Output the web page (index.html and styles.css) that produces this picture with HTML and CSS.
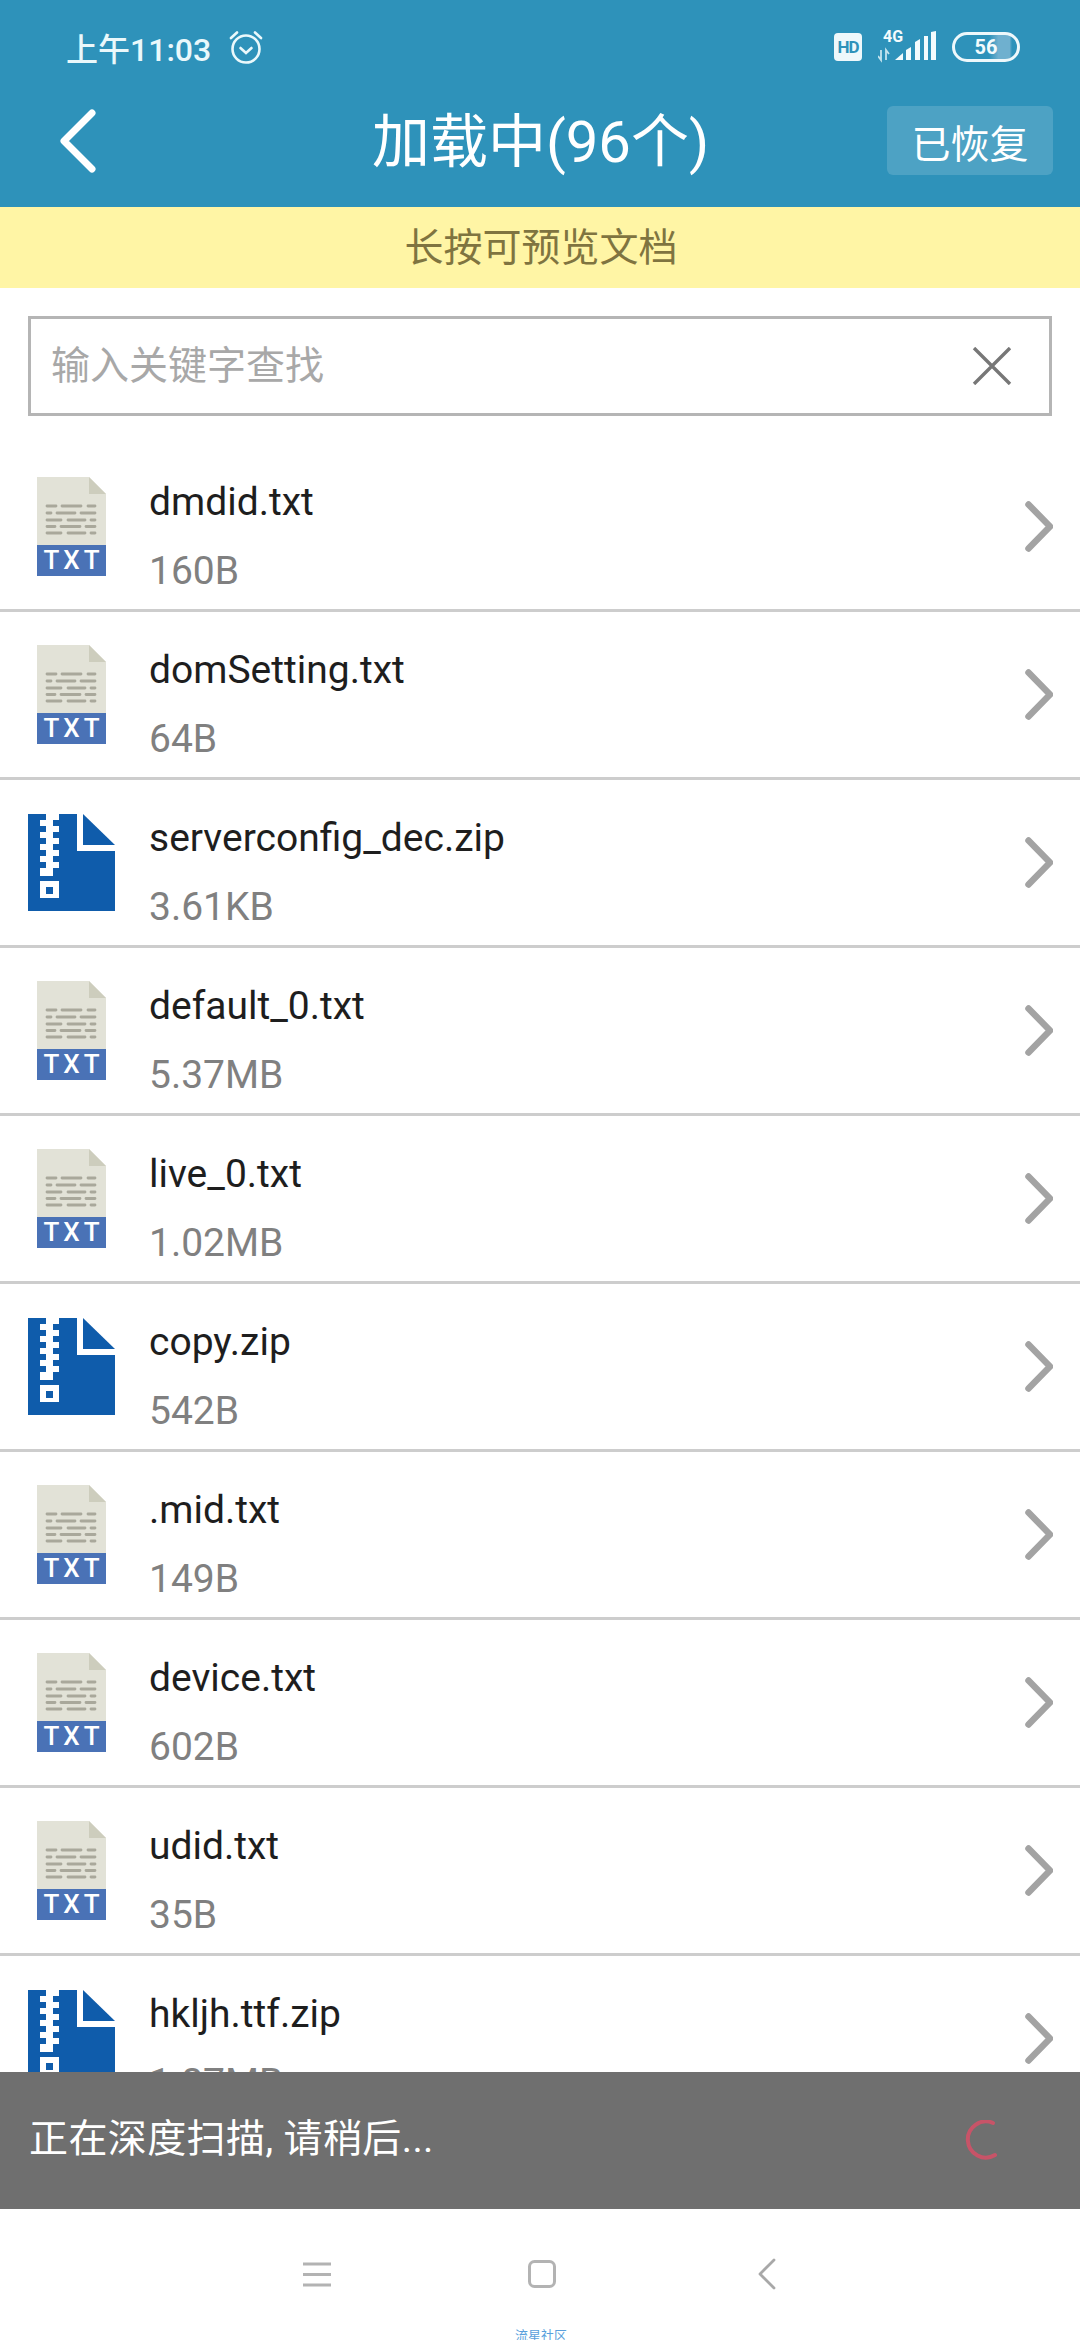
FILE: index.html
```html
<!DOCTYPE html>
<html lang="zh-CN">
<head>
    <meta charset="UTF-8">
    <meta name="viewport" content="width=device-width, initial-scale=1.0">
    <title>加载中</title>
    <link rel="stylesheet" href="styles.css">
</head>
<body>
    <!-- shared icons -->
    <svg class="defs" width="0" height="0">
        <symbol id="icon-txt" viewBox="0 0 69 99">
            <path d="M0 0H52L69 17V68H0Z" fill="#e2e2d7"/>
            <path d="M52 0L69 17H52Z" fill="#cdcdbd"/>
            <path d="M0 68H69V99H0Z" fill="#4a72b6"/>
            <g stroke="#a9a89b" stroke-width="2.8" stroke-linecap="round">
                <path d="M10 29H19M25 29H44M51 29H58"/>
                <path d="M10 36H14M20 36H38M44 36H58"/>
                <path d="M10 43H24M31 43H48M54 43H58"/>
                <path d="M10 49.5H18M24 49.5H43M49 49.5H58"/>
                <path d="M10 56H24M31 56H48M54 56H58"/>
            </g>
        </symbol>
        <symbol id="icon-zip" viewBox="0 0 87 97">
            <path d="M0 0H49V37H87V97H0Z" fill="#0f5cab"/>
            <path d="M55 0L87 31H55Z" fill="#0f5cab"/>
            <path d="M18 0H25V62H18Z" fill="#fff"/>
            <path d="M12 6H18V12H12ZM12 18H18V24H12ZM12 30H18V36H12ZM12 42H18V48H12ZM12 54H18V62H12Z" fill="#fff"/>
            <path d="M25 0H31V6H25ZM25 12H31V18H25ZM25 24H31V30H25ZM25 36H31V42H25ZM25 48H31V54H25Z" fill="#fff"/>
            <path d="M12 67H31V84H12ZM18 73V80H25V73Z" fill="#fff" fill-rule="evenodd"/>
        </symbol>
        <symbol id="icon-more" viewBox="0 0 28 51">
            <path d="M3.5 3.5L25 25.5L3.5 47.5" fill="none" stroke="#a3a3a3" stroke-width="6.5" stroke-linecap="round" stroke-linejoin="round"/>
        </symbol>
    </svg>

    <div class="top">
        <div class="statusbar">
            <div class="status-left">
                <span class="time">上午11:03</span>
                <svg class="alarm" width="36" height="36" viewBox="0 0 36 36" fill="none" stroke="#eaf8fb" stroke-linecap="round">
                    <circle cx="18" cy="20" r="13.5" stroke-width="2.6"/>
                    <path d="M12.5 19L18 24L23.5 19" stroke-width="2.6"/>
                    <path d="M3 9L9 3.5M33 9L27 3.5" stroke-width="2.6"/>
                </svg>
            </div>
            <div class="status-right">
                <span class="hd">HD</span>
                <div class="signal">
                    <span class="net-label">4G</span>
                    <svg width="58" height="32" viewBox="0 0 58 32">
                        <path d="M3 19V29L0 25M8 29V19L11 23" fill="none" stroke="#eaf8fb" stroke-width="1.8" opacity=".8"/>
                        <path d="M17 29L25 22V29Z" fill="#f3fbfd"/>
                        <path d="M28 19L33 16V29H28Z" fill="#f3fbfd"/>
                        <path d="M37 11L42 8V29H37Z" fill="#f3fbfd"/>
                        <path d="M46 5H50V29H46ZM53 1L58 0V29H53Z" fill="#f3fbfd"/>
                    </svg>
                </div>
                <span class="battery">56</span>
            </div>
        </div>
        <div class="toolbar">
            <div class="toolbar-left">
                <svg width="36" height="64" viewBox="0 0 36 64" fill="none" stroke="#fff" stroke-width="7" stroke-linecap="round" stroke-linejoin="round">
                    <path d="M32 4L4 32L32 60"/>
                </svg>
            </div>
            <div class="title">加载中(96个)</div>
            <div class="toolbar-right">
                <button class="restored">已恢复</button>
            </div>
        </div>
    </div>

    <div class="tip">长按可预览文档</div>

    <div class="search">
        <span class="placeholder">输入关键字查找</span>
        <svg width="40" height="38" viewBox="0 0 40 38" fill="none" stroke="#777" stroke-width="3.4">
            <path d="M2 1L38 37M38 1L2 37"/>
        </svg>
    </div>

    <div class="list">
        <div class="row">
            <div class="icon"><div class="txt"><svg><use href="#icon-txt"/></svg><span class="txt-label">TXT</span></div></div>
            <div class="info"><div class="name">dmdid.txt</div><div class="size">160B</div></div>
            <svg class="more"><use href="#icon-more"/></svg>
        </div>
        <div class="row">
            <div class="icon"><div class="txt"><svg><use href="#icon-txt"/></svg><span class="txt-label">TXT</span></div></div>
            <div class="info"><div class="name">domSetting.txt</div><div class="size">64B</div></div>
            <svg class="more"><use href="#icon-more"/></svg>
        </div>
        <div class="row">
            <div class="icon"><svg class="zip"><use href="#icon-zip"/></svg></div>
            <div class="info"><div class="name">serverconfig_dec.zip</div><div class="size">3.61KB</div></div>
            <svg class="more"><use href="#icon-more"/></svg>
        </div>
        <div class="row">
            <div class="icon"><div class="txt"><svg><use href="#icon-txt"/></svg><span class="txt-label">TXT</span></div></div>
            <div class="info"><div class="name">default_0.txt</div><div class="size">5.37MB</div></div>
            <svg class="more"><use href="#icon-more"/></svg>
        </div>
        <div class="row">
            <div class="icon"><div class="txt"><svg><use href="#icon-txt"/></svg><span class="txt-label">TXT</span></div></div>
            <div class="info"><div class="name">live_0.txt</div><div class="size">1.02MB</div></div>
            <svg class="more"><use href="#icon-more"/></svg>
        </div>
        <div class="row">
            <div class="icon"><svg class="zip"><use href="#icon-zip"/></svg></div>
            <div class="info"><div class="name">copy.zip</div><div class="size">542B</div></div>
            <svg class="more"><use href="#icon-more"/></svg>
        </div>
        <div class="row">
            <div class="icon"><div class="txt"><svg><use href="#icon-txt"/></svg><span class="txt-label">TXT</span></div></div>
            <div class="info"><div class="name">.mid.txt</div><div class="size">149B</div></div>
            <svg class="more"><use href="#icon-more"/></svg>
        </div>
        <div class="row">
            <div class="icon"><div class="txt"><svg><use href="#icon-txt"/></svg><span class="txt-label">TXT</span></div></div>
            <div class="info"><div class="name">device.txt</div><div class="size">602B</div></div>
            <svg class="more"><use href="#icon-more"/></svg>
        </div>
        <div class="row">
            <div class="icon"><div class="txt"><svg><use href="#icon-txt"/></svg><span class="txt-label">TXT</span></div></div>
            <div class="info"><div class="name">udid.txt</div><div class="size">35B</div></div>
            <svg class="more"><use href="#icon-more"/></svg>
        </div>
        <div class="row">
            <div class="icon"><svg class="zip"><use href="#icon-zip"/></svg></div>
            <div class="info"><div class="name">hkljh.ttf.zip</div><div class="size">1.87MB</div></div>
            <svg class="more"><use href="#icon-more"/></svg>
        </div>
    </div>

    <div class="toast">
        <span class="toast-text">正在深度扫描, 请稍后...</span>
        <svg class="spinner" width="34" height="42" viewBox="0 0 34 42" fill="none" stroke="#c75468" stroke-width="4" stroke-linecap="round">
            <path d="M28 3A18 18 0 1 0 30 35"/>
        </svg>
    </div>

    <div class="navkeys">
        <div class="key">
            <svg width="28" height="25" viewBox="0 0 28 25" fill="none" stroke="#b3b3b3" stroke-width="3">
                <path d="M0 2H28M0 12.500H28M0 23H28"/>
            </svg>
        </div>
        <div class="key">
            <svg width="28" height="28" viewBox="0 0 28 28" fill="none" stroke="#b3b3b3" stroke-width="3">
                <rect x="1.500" y="1.500" width="25" height="25" rx="5"/>
            </svg>
        </div>
        <div class="key">
            <svg width="18" height="32" viewBox="0 0 18 32" fill="none" stroke="#a8a8a8" stroke-width="2.800" stroke-linecap="round" stroke-linejoin="round">
                <path d="M16 2L2 16L16 30"/>
            </svg>
        </div>
        <span class="watermark">流星社区</span>
    </div>
</body>
</html>
```

FILE: styles.css
```css
body {
    font-family: "Roboto", "Noto Sans CJK SC", sans-serif;
    margin: 0;
    padding: 0;
    width: 1080px;
    height: 2340px;
    overflow: hidden;
    display: flex;
    flex-direction: column;
    background-color: #fff;
}

.defs {
    position: absolute;
}

.top {
    background-color: #2e92ba;
    color: #fff;
}

.statusbar {
    height: 94px;
    display: flex;
    justify-content: space-between;
    align-items: center;
    padding: 0 60px 0 66px;
}

.status-left,
.status-right {
    display: flex;
    align-items: center;
}

.time {
    font-size: 32px;
    font-weight: 500;
    color: #eaf8fb;
}

.alarm {
    margin-left: 17px;
}

.hd {
    width: 28px;
    height: 28px;
    border-radius: 4px;
    background-color: #eef8fb;
    color: #2e92ba;
    font-size: 17px;
    font-weight: 700;
    line-height: 28px;
    text-align: center;
    letter-spacing: -1px;
}

.signal {
    margin-left: 16px;
    position: relative;
    height: 32px;
}

.net-label {
    position: absolute;
    left: 5px;
    top: -2px;
    font-weight: 700;
    font-size: 16px;
    line-height: 16px;
    color: #f3fbfd;
}

.battery {
    box-sizing: border-box;
    width: 68px;
    height: 30px;
    margin-left: 16px;
    border: 3px solid #eef8fb;
    border-radius: 15px;
    background: linear-gradient(to right, transparent 55%, #6fb0cf 70%, #6fb0cf 88%, transparent 92%);
    font-size: 20px;
    font-weight: 700;
    line-height: 24px;
    text-align: center;
    color: #f3fbfd;
}

.toolbar {
    box-sizing: border-box;
    height: 113px;
    display: grid;
    grid-template-columns: 1fr auto 1fr;
    align-items: center;
    padding: 0 27px 20px 60px;
}

.toolbar-left {
    display: flex;
    align-items: center;
}

.title {
    font-size: 58px;
    line-height: 80px;
    padding-top: 3px;
    transform: translateX(-16px);
}

.toolbar-right {
    display: flex;
    justify-content: flex-end;
}

.restored {
    width: 166px;
    height: 69px;
    padding: 0;
    border: none;
    border-radius: 6px;
    background-color: rgba(255, 255, 255, 0.15);
    color: #fff;
    font-family: inherit;
    font-size: 39px;
}

.tip {
    height: 81px;
    padding-left: 2px;
    line-height: 83px;
    text-align: center;
    background-color: #fff5a5;
    color: #7f7440;
    font-size: 39px;
}

.search {
    box-sizing: border-box;
    height: 100px;
    margin: 28px 28px 28px;
    padding: 0 37px 0 20px;
    border: 3px solid #b5b5b5;
    display: flex;
    justify-content: space-between;
    align-items: center;
}

.placeholder {
    color: #a8a8a8;
    font-size: 39px;
    line-height: 54px;
}

.list {
    flex: 1;
    overflow: hidden;
}

.row {
    box-sizing: border-box;
    height: 168px;
    border-bottom: 3px solid #cdcdcd;
    display: flex;
    align-items: center;
}

.icon {
    width: 149px;
    flex-shrink: 0;
    display: flex;
}

.icon .txt {
    width: 69px;
    height: 99px;
    margin-left: 37px;
    position: relative;
}

.icon .txt svg {
    width: 69px;
    height: 99px;
    display: block;
}

.txt-label {
    position: absolute;
    left: 0;
    right: 0;
    bottom: 3px;
    font-weight: 500;
    font-size: 26px;
    line-height: 26px;
    letter-spacing: 4px;
    text-indent: 4px;
    text-align: center;
    color: #fff;
}

.icon .zip {
    width: 87px;
    height: 97px;
    margin-left: 28px;
}

.info {
    flex: 1;
    align-self: flex-start;
    padding-top: 24px;
}

.name {
    font-size: 39px;
    line-height: 69px;
    color: #1e1e1e;
}

.size {
    font-size: 39px;
    line-height: 69px;
    color: #808080;
}

.more {
    width: 28px;
    height: 51px;
    margin-right: 27px;
    flex-shrink: 0;
}

.toast {
    box-sizing: border-box;
    height: 137px;
    flex-shrink: 0;
    display: flex;
    justify-content: space-between;
    align-items: center;
    padding: 0 81px 0 29px;
    background-color: #6f6f6f;
    color: #fff;
    font-size: 39px;
}

.toast-text {
    line-height: 50px;
    margin-bottom: 4px;
    letter-spacing: 0.4px;
}

.navkeys {
    height: 131px;
    flex-shrink: 0;
    display: flex;
    justify-content: center;
    position: relative;
    padding: 37px 0 0 3px;
    box-sizing: border-box;
}

.key {
    width: 225px;
    height: 56px;
    display: flex;
    justify-content: center;
    align-items: center;
}

.watermark {
    position: absolute;
    left: 515px;
    bottom: -4px;
    color: #5a9fdc;
    font-size: 13px;
}
```
